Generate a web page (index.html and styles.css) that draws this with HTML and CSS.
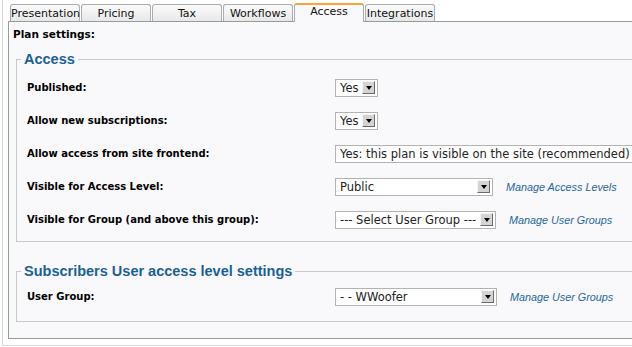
FILE: index.html
```html
<!DOCTYPE html>
<html lang="en">
<head>
  <meta charset="UTF-8" />
  <title>Plan settings</title>
  <link rel="stylesheet" href="styles.css">
</head>
<body>

  <div class="wrap">
    <!-- Tabs -->
    <ul class="tabs">
      <li>Presentation</li>
      <li>Pricing</li>
      <li>Tax</li>
      <li>Workflows</li>
      <li class="active">Access</li>
      <li>Integrations</li>
    </ul>

    <div class="panel">
      <div class="panel-title">Plan settings:</div>

      <!-- Access -->
      <fieldset class="adminform">
        <legend>Access</legend>
        <table class="admintable">
          <tr>
            <td class="key">Published:</td>
            <td><span class="select w-yes"><span class="val">Yes</span><span class="btn"></span></span></td>
          </tr>
          <tr>
            <td class="key">Allow new subscriptions:</td>
            <td><span class="select w-yes"><span class="val">Yes</span><span class="btn"></span></span></td>
          </tr>
          <tr>
            <td class="key">Allow access from site frontend:</td>
            <td><span class="select w-long"><span class="val">Yes: this plan is visible on the site (recommended)</span></span></td>
          </tr>
          <tr>
            <td class="key">Visible for Access Level:</td>
            <td><span class="select w-public"><span class="val">Public</span><span class="btn"></span></span><a class="manage" href="#">Manage Access Levels</a></td>
          </tr>
          <tr>
            <td class="key">Visible for Group (and above this group):</td>
            <td><span class="select w-group"><span class="val">--- Select User Group ---</span><span class="btn"></span></span><a class="manage" href="#">Manage User Groups</a></td>
          </tr>
        </table>
      </fieldset>

      <!-- Subscribers -->
      <fieldset class="adminform subs">
        <legend>Subscribers User access level settings</legend>
        <table class="admintable">
          <tr>
            <td class="key">User Group:</td>
            <td><span class="select w-woof"><span class="val">- - WWoofer</span><span class="btn"></span></span><a class="manage" href="#">Manage User Groups</a></td>
          </tr>
        </table>
      </fieldset>
    </div>
  </div>

</body>
</html>
```

FILE: styles.css
```css
html, body {
  margin: 0;
  overflow: hidden;
  background: #fff;
}

body {
  font-family: "DejaVu Sans", Verdana, sans-serif;
  font-size: 11px;
  color: #000;
}

.wrap {
  width: 760px;
  margin-left: 2px;
  padding: 0 0 6px 5px;
  border-left: 1px solid #d9d9d9;
  border-bottom: 1px solid #d9d9d9;
}

/* tabs */
.tabs {
  display: flex;
  align-items: flex-start;
  gap: 1px;
  height: 17px;
  margin: 0 0 0 2px;
  padding: 4px 0 0;
  list-style: none;
}

.tabs li {
  width: 70px;
  height: 17px;
  box-sizing: border-box;
  border: 1px solid #a8aeb0;
  border-bottom: none;
  border-radius: 3px 3px 0 0;
  background: linear-gradient(#fbfbfb, #e8e8e8);
  text-align: center;
  line-height: 17px;
  white-space: nowrap;
  color: #111;
}

.tabs li.active {
  position: relative;
  z-index: 1;
  margin-top: -1px;
  height: 19px;
  border-top: 2px solid #f2a735;
  background: #f9f9fb;
  line-height: 14px;
}

/* panel */
.panel {
  border: 1px solid #919f9b;
  background: #f9f9fb;
  padding: 6px 0 16px 4px;
}

.panel-title {
  font-weight: bold;
  font-size: 10.5px;
  line-height: 12px;
}

fieldset.adminform {
  margin: 11px 0 0 3px;
  padding: 3px 0 5px 4px;
  border: 1px solid #c9c9c9;
}

fieldset.subs {
  margin-top: 21px;
  padding-top: 0;
  padding-bottom: 8px;
}

legend {
  padding: 0 3px;
  font-family: "Liberation Sans", Arial, sans-serif;
  font-size: 14.5px;
  font-weight: bold;
  line-height: 17px;
  color: #1a6198;
}

.admintable {
  border-collapse: collapse;
}

.admintable td {
  height: 33px;
  padding: 0 6px;
  vertical-align: middle;
  white-space: nowrap;
}

.admintable td.key {
  width: 296px;
  font-weight: bold;
  font-size: 10px;
}

/* fake select boxes */
.select {
  display: inline-flex;
  align-items: center;
  vertical-align: middle;
  height: 18px;
  box-sizing: border-box;
  padding: 0 2px 0 4px;
  border: 1px solid #b3b3b3;
  background: #fff;
  font-size: 11.5px;
  color: #222;
  overflow: hidden;
}

.select .val {
  flex: 1;
  white-space: nowrap;
}

.select .btn {
  display: flex;
  justify-content: center;
  align-items: center;
  width: 13px;
  height: 13px;
  box-sizing: border-box;
  border: 1px solid;
  border-color: #f4f4f4 #6a6a6a #6a6a6a #f4f4f4;
  background: #d4d4d4;
}

.select .btn::after {
  content: "";
  border-left: 3px solid transparent;
  border-right: 3px solid transparent;
  border-top: 4px solid #000;
}

.w-yes { width: 43px; }
.w-long { width: 310px; }
.w-public { width: 158px; }
.w-group { width: 161px; }
.w-woof { width: 162px; }

a.manage {
  margin-left: 13px;
  vertical-align: middle;
  font-family: "Liberation Sans", Arial, sans-serif;
  font-size: 10.8px;
  font-style: italic;
  color: #1f67a0;
  text-decoration: none;
}
```
